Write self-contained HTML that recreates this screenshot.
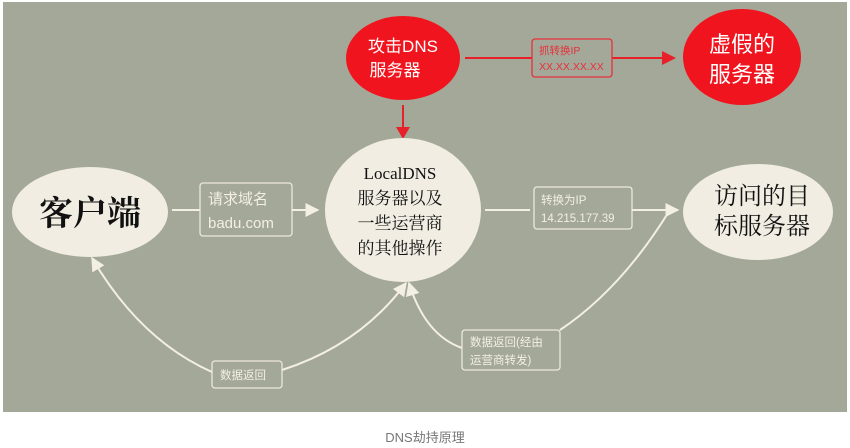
<!DOCTYPE html>
<html><head><meta charset="utf-8"><style>
html,body{margin:0;padding:0;background:#fff;width:850px;height:448px;overflow:hidden}
svg{display:block}
.s{font-family:"Liberation Serif","Noto Serif CJK SC",serif}
.a{font-family:"Liberation Sans","Noto Sans CJK SC",sans-serif}
</style></head><body>
<svg width="850" height="448" viewBox="0 0 850 448">
<rect x="3" y="2" width="844" height="410" fill="#a4a899"/>
<defs>
<marker id="wa" viewBox="0 0 10 10" refX="9" refY="5" markerWidth="7" markerHeight="7" orient="auto"><path d="M0,0L10,5L0,10z" fill="#f3efe4"/></marker>
</defs>
<ellipse cx="403" cy="58" rx="57" ry="42" fill="#f0141e"/>
<text class="a" x="403" y="52" font-size="17" fill="#fff" text-anchor="middle">攻击DNS</text>
<text class="a" x="395" y="76" font-size="17" fill="#fff" text-anchor="middle">服务器</text>
<line x1="465" y1="58" x2="662" y2="58" stroke="#e8202a" stroke-width="2"/>
<path d="M662,51L676,58L662,65z" fill="#e8202a"/>
<rect x="532" y="39" width="80" height="38" rx="3" fill="#a4a899" stroke="#e8303a" stroke-width="1.3"/>
<text class="a" x="539" y="54" font-size="10.5" fill="#e8303a">抓转换IP</text>
<text class="a" x="539" y="70" font-size="10.5" fill="#e8303a">XX.XX.XX.XX</text>
<ellipse cx="742" cy="57" rx="59" ry="48" fill="#f0141e"/>
<text class="a" x="742" y="52" font-size="22" fill="#fff" text-anchor="middle">虚假的</text>
<text class="a" x="742" y="82" font-size="22" fill="#fff" text-anchor="middle">服务器</text>
<line x1="403" y1="105" x2="403" y2="128" stroke="#e8202a" stroke-width="2"/>
<path d="M396,127L403,139L410,127z" fill="#e8202a"/>
<ellipse cx="90" cy="212" rx="78" ry="45" fill="#f1ede2"/>
<text class="s" x="90" y="225" font-size="34" font-weight="bold" fill="#111" text-anchor="middle">客户端</text>
<line x1="172" y1="210" x2="200" y2="210" stroke="#f3efe4" stroke-width="2"/>
<rect x="200" y="183" width="92" height="53" rx="3" fill="none" stroke="#ece8dc" stroke-width="1.3"/>
<text class="a" x="208" y="204" font-size="15" fill="#f3efe4">请求域名</text>
<text class="a" x="208" y="228" font-size="15" fill="#f3efe4">badu.com</text>
<line x1="292" y1="210" x2="318" y2="210" stroke="#f3efe4" stroke-width="2" marker-end="url(#wa)"/>
<ellipse cx="403" cy="210" rx="78" ry="72" fill="#f1ede2"/>
<g class="s" font-size="17" fill="#111" text-anchor="middle">
<text x="400" y="179">LocalDNS</text>
<text x="400" y="204">服务器以及</text>
<text x="400" y="229">一些运营商</text>
<text x="400" y="254">的其他操作</text>
</g>
<line x1="485" y1="210" x2="530" y2="210" stroke="#f3efe4" stroke-width="2"/>
<rect x="534" y="187" width="98" height="42" rx="3" fill="none" stroke="#ece8dc" stroke-width="1.3"/>
<text class="a" x="541" y="204" font-size="11.5" fill="#f3efe4">转换为IP</text>
<text class="a" x="541" y="222" font-size="11.5" fill="#f3efe4">14.215.177.39</text>
<line x1="632" y1="210" x2="678" y2="210" stroke="#f3efe4" stroke-width="2" marker-end="url(#wa)"/>
<ellipse cx="758" cy="212" rx="75" ry="48" fill="#f1ede2"/>
<text class="s" x="762" y="204" font-size="24" fill="#111" text-anchor="middle">访问的目</text>
<text class="s" x="762" y="234" font-size="24" fill="#111" text-anchor="middle">标服务器</text>
<path d="M212,372 Q140,340 92,258" fill="none" stroke="#f3efe4" stroke-width="2" marker-end="url(#wa)"/>
<path d="M282,370 Q360,345 406,283" fill="none" stroke="#f3efe4" stroke-width="2" marker-end="url(#wa)"/>
<rect x="212" y="361" width="70" height="27" rx="3" fill="none" stroke="#ece8dc" stroke-width="1.3"/>
<text class="a" x="220" y="379" font-size="11.5" fill="#f3efe4">数据返回</text>
<path d="M462,348 Q425,335 409,283" fill="none" stroke="#f3efe4" stroke-width="2" marker-end="url(#wa)"/>
<path d="M560,330 Q620,290 668,213" fill="none" stroke="#f3efe4" stroke-width="2"/>
<rect x="462" y="330" width="98" height="40" rx="3" fill="none" stroke="#ece8dc" stroke-width="1.3"/>
<text class="a" x="470" y="346" font-size="11.5" fill="#f3efe4">数据返回(经由</text>
<text class="a" x="470" y="364" font-size="11.5" fill="#f3efe4">运营商转发)</text>
<text class="a" x="425" y="442" font-size="13" fill="#777" text-anchor="middle">DNS劫持原理</text>
</svg>
</body></html>
